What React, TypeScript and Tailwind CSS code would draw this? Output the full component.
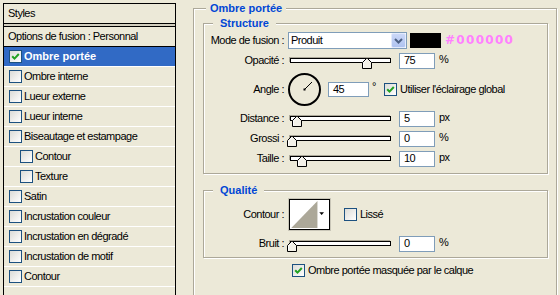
import type { ReactNode } from 'react'

const font = "font-['Liberation_Sans',Arial,sans-serif]"

interface StyleItem {
  label: string
  checked?: boolean
  active?: boolean
  indent?: boolean
}

const items: StyleItem[] = [
  { label: 'Ombre portée', checked: true, active: true },
  { label: 'Ombre interne' },
  { label: 'Lueur externe' },
  { label: 'Lueur interne' },
  { label: 'Biseautage et estampage' },
  { label: 'Contour', indent: true },
  { label: 'Texture', indent: true },
  { label: 'Satin' },
  { label: 'Incrustation couleur' },
  { label: 'Incrustation en dégradé' },
  { label: 'Incrustation de motif' },
  { label: 'Contour' },
]

function Check({ checked }: { checked?: boolean }) {
  return (
    <span className="flex h-[13px] w-[13px] shrink-0 items-center justify-center border border-[#1C5180] bg-gradient-to-br from-[#DCDCD7] to-white">
      {checked && (
        <svg width="9" height="9" viewBox="0 0 9 9">
          <path d="M1.2 4.2 L3.5 6.6 L7.8 2" stroke="#21A121" strokeWidth="2" fill="none" />
        </svg>
      )}
    </span>
  )
}

function Thumb({ left }: { left: number }) {
  return (
    <svg className="absolute top-0" style={{ left }} width="10" height="11" viewBox="0 0 10 11">
      <polygon points="0.5,4.5 4.5,0.5 5.5,0.5 9.5,4.5 9.5,10.5 0.5,10.5" fill="#F3F1E8" stroke="#000" />
      <path d="M1.5 9.5 L1.5 4.9 L5 1.6" stroke="#fff" fill="none" />
    </svg>
  )
}

function Slider({ value }: { value: number }) {
  return (
    <div className="relative ml-[2px] mt-[5px] h-[11px] w-[109px] shrink-0 self-start">
      <div className="h-[5px] w-[101px] border border-black bg-white shadow-[-1px_-1px_0_#ACA899]" />
      <Thumb left={value - 3} />
    </div>
  )
}

function Num({ value }: { value: string }) {
  return (
    <div className="flex h-[16px] w-[36px] shrink-0 items-center border border-[#7F9DB9] bg-white pl-[4px]">
      {value}
    </div>
  )
}

function Row({ label, children, className = 'h-[17px]' }: { label: string; children: ReactNode; className?: string }) {
  return (
    <div className={`flex items-center ${className}`}>
      <span className="w-[80px] shrink-0 text-right">{label}</span>
      <div className="ml-[4px] flex items-center">{children}</div>
    </div>
  )
}

function SliderRow({ label, value, unit, className }: { label: string; value: number; unit: string; className?: string }) {
  return (
    <Row label={label} className={`h-[17px] ${className ?? ''}`}>
      <Slider value={value} />
      <Num value={String(value)} />
      <span className="ml-[4px] self-start leading-[13px]">{unit}</span>
    </Row>
  )
}

function Legend({ children, className }: { children: ReactNode; className: string }) {
  return (
    <legend className={`${className} bg-[#ECE9D8] text-[11px] font-bold leading-[13px] tracking-normal text-[#0046D5]`}>
      {children}
    </legend>
  )
}

const box = 'border border-[#ACA899] shadow-[inset_1px_1px_0_#fff,1px_1px_0_#fff]'

export default function App() {
  return (
    <div className={`flex h-[295px] w-[560px] overflow-hidden bg-[#ECE9D8] text-[11px] leading-[13px] tracking-[-0.5px] text-black ${font}`}>
      {/* styles list */}
      <aside className="ml-[3px] mt-[3px] flex h-[300px] w-[173px] shrink-0 flex-col border border-black">
        <div className="flex h-[20px] shrink-0 items-center border-b border-black pl-[4px]">Styles</div>
        <div className="h-[2px] shrink-0 bg-[#D3CFBF]" />
        <div className="flex h-[21px] shrink-0 items-center border-y border-black pl-[4px]">
          Options de fusion : Personnal
        </div>
        {items.map((it, i) => (
          <div
            key={i}
            className={`flex h-[20px] shrink-0 items-center gap-[2px] border-b border-white ${
              it.indent ? 'pl-[16px]' : 'pl-[5px]'
            } ${it.active ? 'bg-[#316AC5] font-bold tracking-normal text-white' : ''}`}
          >
            <Check checked={it.checked} />
            <span>{it.label}</span>
          </div>
        ))}
      </aside>

      {/* options */}
      <fieldset className={`ml-[17px] mt-[2px] h-[320px] w-[364px] shrink-0 pl-[9px] pr-[8px] pt-[2px] ${box}`}>
        <Legend className="ml-[3px] px-[4px]">Ombre portée</Legend>

        <fieldset className={`w-[345px] pb-[6px] ${box}`}>
          <Legend className="ml-[9px] px-[7px]">Structure</Legend>
          <Row label="Mode de fusion :" className="mt-[2px] h-[17px]">
            <div className="flex h-[17px] w-[119px] items-center border border-[#7F9DB9] bg-white">
              <span className="flex-1 pl-[2px]">Produit</span>
              <span className="flex h-[15px] w-[15px] items-center justify-center rounded-[2px] border border-[#E3EBFD] bg-gradient-to-b from-[#CBD8F8] to-[#AFC3F0]">
                <svg width="9" height="6" viewBox="0 0 9 6">
                  <path d="M1 1 L4.5 4.5 L8 1" stroke="#4D6185" strokeWidth="2" fill="none" />
                </svg>
              </span>
            </div>
            <div className="ml-[3px] h-[15px] w-[31px] bg-black" />
            <span className="ml-[4px] font-['DejaVu_Sans',sans-serif] text-[12px] font-bold tracking-[1.3px] text-[#FF80FF]">
              #000000
            </span>
          </Row>
          <SliderRow label="Opacité :" value={75} unit="%" className="mt-[3px]" />
          <Row label="Angle :" className="mt-[3px] h-[34px]">
            <svg width="33" height="33" viewBox="0 0 33 33">
              <circle cx="16.5" cy="16.5" r="15.5" stroke="#000" strokeWidth="2" fill="none" />
              <line x1="16.5" y1="16.5" x2="24" y2="9" stroke="#000" strokeWidth="1" />
              <rect x="15.5" y="15.5" width="2" height="2" fill="#000" />
            </svg>
            <div className="ml-[7px] flex h-[15px] w-[41px] items-center border border-[#7F9DB9] bg-white pl-[4px]">45</div>
            <span className="mb-[6px] w-[15px] pl-[3px]">°</span>
            <Check checked />
            <span className="ml-[3px]">Utiliser l'éclairage global</span>
          </Row>
          <SliderRow label="Distance :" value={5} unit="px" className="mt-[4px]" />
          <SliderRow label="Grossi :" value={0} unit="%" className="mt-[3px]" />
          <SliderRow label="Taille :" value={10} unit="px" className="mt-[3px]" />
        </fieldset>

        <fieldset className={`mt-[10px] w-[345px] pb-[5px] ${box}`}>
          <Legend className="ml-[9px] px-[7px]">Qualité</Legend>
          <Row label="Contour :" className="mt-[1px] h-[33px]">
            <div className="h-[33px] w-[43px] border border-[#C9C6B8] bg-white">
              <svg className="block border border-black" width="41" height="31" viewBox="0 0 41 31">
                <rect width="41" height="31" fill="#fff" />
                <polygon points="1,30 29,1 29,30" fill="#ACA899" />
                <polygon points="31,13 36,13 33.5,16" fill="#000" />
              </svg>
            </div>
            <span className="ml-[13px]">
              <Check />
            </span>
            <span className="ml-[3px]">Lissé</span>
          </Row>
          <SliderRow label="Bruit :" value={0} unit="%" className="mt-[4px]" />
        </fieldset>

        <div className="mt-[6px] flex h-[13px] items-center gap-[3px] pl-[89px]">
          <Check checked />
          <span>Ombre portée masquée par le calque</span>
        </div>
      </fieldset>
    </div>
  )
}
